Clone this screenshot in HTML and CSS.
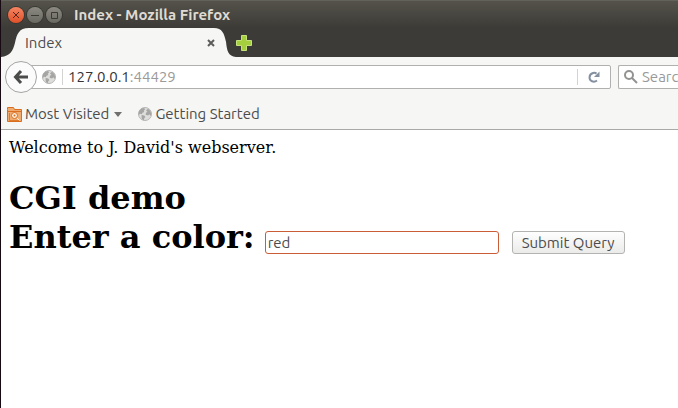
FILE: index.html
```html
<!DOCTYPE html>
<html lang="en">
<head>
<meta charset="utf-8">
<title>Index</title>
<link rel="stylesheet" href="styles.css">
</head>
<body>
<svg class="defs" aria-hidden="true">
  <symbol id="globe" viewBox="0 0 14 14">
    <circle cx="7" cy="7" r="6.5" fill="#dededd" stroke="#b5b5b4"/>
    <path d="M1 4.2 3.4 1.6 6 1l1.2 1.3-1.5 1.5.6 1.3-1.8.6-.7 1.6-1.6-.6L.6 8ZM8 3.200l2-1.500 2.400 2.200.9 3-.7 2.200-1.300-1.800-1.200 1.200-2.500-.8.5-2.100 1.400-.5ZM3.600 8l2.600.5 1.300 1.600-1.300 1.200-.2 1.900-2-.9-.4-2Z" fill="#a5a5a4"/>
  </symbol>
</svg>
<div class="window">
  <header class="chrome">
    <div class="titlebar">
      <div class="controls">
        <button class="control close" aria-label="Close"><svg viewBox="0 0 16 16"><path d="m5 5 6 6m0-6-6 6"/></svg></button>
        <button class="control" aria-label="Minimize"><svg viewBox="0 0 16 16"><path d="M4 8.500h8"/></svg></button>
        <button class="control" aria-label="Maximize"><svg viewBox="0 0 16 16"><path d="M5.500 5.500h6v6h-6z"/></svg></button>
      </div>
      <span class="title">Index - Mozilla Firefox</span>
    </div>
    <div class="tabs">
      <div class="tab">
        <svg class="tab-shape" viewBox="0 0 236 29" preserveAspectRatio="none" aria-hidden="true"><path d="M0 29C9 28 12 23 14 15 16 6 18 0 28 0H214c8 0 10 5 12 14 1 9 2 14 10 15Z"/></svg>
        <span class="tab-label">Index</span>
        <button class="tab-close" aria-label="Close tab"><svg viewBox="0 0 10 10"><path d="m2 2 6 6m0-6-6 6"/></svg></button>
      </div>
      <button class="new-tab" aria-label="New tab"><svg viewBox="0 0 16 16"><path d="M5.500.500h5v5h5v5h-5v5h-5v-5h-5v-5h5z"/></svg></button>
    </div>
  </header>
  <nav class="toolbar">
    <button class="back" aria-label="Back"><svg viewBox="0 0 16 16"><path d="M8 2 2.500 8 8 14M3 8h12"/></svg></button>
    <div class="address">
      <svg class="globe"><use href="#globe"/></svg>
      <span class="url"><span class="host">127.0.0.1</span>:44429</span>
      <button class="reload" aria-label="Reload"><svg viewBox="0 0 14 14"><path class="arc" d="M9.500 3.600C8.500 2.800 7 2.700 6 3 1.500 4.300 1.600 10 5 11.300c1.800.7 3.600.3 5-.8"/><path class="tip" d="M12.500 1.500V7H7z"/></svg></button>
    </div>
    <label class="search">
      <svg viewBox="0 0 16 16"><circle cx="6" cy="6" r="4"/><path d="m9 9 5 5"/></svg>
      <input type="text" placeholder="Search" aria-label="Search">
    </label>
  </nav>
  <nav class="bookmarks">
    <a href="#"><svg class="folder" viewBox="0 0 15 15"><path d="M.500 2.500v-2h6l1 2h7v12h-14z" fill="#f0ab70" stroke="#d96f1e"/><path d="M1 4.500h13" stroke="#d96f1e"/><path d="M2.500 6v7.500h10" fill="none" stroke="#e07a2c"/><circle cx="7.500" cy="8.500" r="3" fill="#fff0df" stroke="#d96f1e"/><circle cx="7.500" cy="8.500" r="1" fill="#d96f1e"/><path d="m10 11 2.500 2.500" stroke="#fff0df"/></svg>Most Visited<svg class="caret" viewBox="0 0 8 5"><path d="M0 0h8L4 5z"/></svg></a>
    <a href="#"><svg class="globe"><use href="#globe"/></svg>Getting Started</a>
  </nav>
  <main class="page">
    <p>Welcome to J. David's webserver.</p>
    <h1>CGI demo</h1>
    <form class="query">
      <label for="color">Enter a color:</label>
      <input id="color" type="text" value="red">
      <button type="button">Submit Query</button>
    </form>
  </main>
</div>
</body>
</html>
```
FILE: styles.css
```css
* {
  box-sizing: border-box;
}

body {
  margin: 0;
  background: #fff;
  color: #4c4c4c;
  font: 15px/20px Ubuntu, "Noto Sans", sans-serif;
}

button {
  padding: 0;
  border: 0;
  background: none;
  color: inherit;
  font: inherit;
}

svg {
  display: block;
  flex: none;
}

.defs {
  position: absolute;
  width: 0;
  height: 0;
}

.window {
  min-height: 100vh;
  border-left: 1px solid #170a12;
  overflow: hidden;
}

.chrome {
  background: linear-gradient(#55534b, #3c3b37 28px);
}

.titlebar {
  display: flex;
  align-items: center;
  gap: 12px;
  height: 28px;
  padding-left: 7px;
  border-top: 1px solid #62615a;
}

.controls {
  display: flex;
  gap: 3px;
}

.control {
  width: 16px;
  height: 16px;
  border-radius: 50%;
  background: linear-gradient(#8b8981, #6a6961);
  box-shadow: 0 0 0 1px #383731;
}

.control.close {
  background: linear-gradient(#f58462, #e0512a);
}

.control path {
  fill: none;
  stroke: #3a3932;
}

.close path {
  stroke: #5b2413;
}

.title {
  color: #dfdbd2;
  font-weight: bold;
}

.tabs {
  display: flex;
  height: 29px;
}

.tab {
  position: relative;
  display: flex;
  align-items: center;
  justify-content: space-between;
  width: 235px;
  padding: 0 20px 0 24px;
}

.tab-shape {
  position: absolute;
  inset: 0;
  width: 100%;
  height: 100%;
  fill: #f6f6f5;
}

.tab-label,
.tab-close {
  position: relative;
}

.tab-close svg {
  width: 10px;
  height: 10px;
  stroke: #5c5c5a;
  stroke-width: 2;
}

.new-tab svg {
  width: 16px;
  height: 16px;
  fill: #a5cf3c;
  stroke: #c6e27c;
}

.toolbar {
  display: flex;
  align-items: center;
  height: 40px;
  padding-left: 4px;
  background: #f6f6f5;
}

.back {
  z-index: 1;
  display: grid;
  place-items: center;
  width: 32px;
  height: 32px;
  border: 1px solid #a5a5a4;
  border-radius: 50%;
  background: #fbfbfb;
}

.back svg {
  width: 16px;
  height: 16px;
  fill: none;
  stroke: #4b4b4a;
  stroke-width: 3;
}

.address {
  display: flex;
  flex: 1;
  align-items: center;
  height: 24px;
  margin-left: -8px;
  padding-left: 12px;
  border: 1px solid #b0b0af;
  border-radius: 2px;
  background: #fff;
}

.globe {
  width: 14px;
  height: 14px;
}

.url {
  flex: 1;
  margin-left: 6px;
  padding-left: 5px;
  border-left: 1px solid #d3d3d2;
  line-height: 16px;
  color: #9a9a99;
}

.host {
  color: #333;
}

.reload {
  padding: 1px 9px;
  border-left: 1px solid #d3d3d2;
}

.reload svg {
  width: 14px;
  height: 14px;
}

.arc {
  fill: none;
  stroke: #8490a0;
  stroke-width: 2;
}

.tip {
  fill: #8490a0;
}

.search {
  display: flex;
  align-items: center;
  gap: 3px;
  width: 60px;
  height: 24px;
  margin-left: 7px;
  padding-left: 4px;
  border: 1px solid #b0b0af;
  border-right: 0;
  border-radius: 2px 0 0 2px;
  background: #fff;
}

.search svg {
  width: 16px;
  height: 16px;
  fill: none;
  stroke: #929291;
  stroke-width: 2;
}

.search input {
  flex: 1;
  min-width: 0;
  padding: 0;
  border: 0;
  outline: 0;
  background: none;
  font: inherit;
}

.search input::placeholder {
  color: #999;
}

.bookmarks {
  display: flex;
  align-items: center;
  gap: 16px;
  height: 33px;
  padding: 2px 0 0 6px;
  border-bottom: 1px solid #a9a9a8;
  background: #f6f6f5;
}

.bookmarks a {
  display: flex;
  align-items: center;
  gap: 3px;
  color: inherit;
  text-decoration: none;
}

.folder {
  width: 15px;
  height: 15px;
}

.caret {
  width: 8px;
  height: 5px;
  margin-left: 2px;
  fill: #70706f;
}

.page {
  padding: 8px;
  color: #000;
  font: 16px/19px "DejaVu Serif", serif;
}

.page p {
  margin: 0 0 22px;
}

.page h1,
.query label {
  margin: 0;
  font-size: 32px;
  font-weight: bold;
  line-height: 39px;
}

.query {
  display: flex;
  align-items: center;
}

.query input,
.query button {
  height: 23px;
  margin-top: 10px;
  border: 1px solid #b3b3b2;
  border-radius: 3px;
  color: #4c4c4c;
  font: 15px/20px Ubuntu, "Noto Sans", sans-serif;
}

.query input {
  width: 234px;
  margin-left: 10px;
  padding: 0 2px;
  border-color: #cb5c38;
  outline: 0;
  background: #fff;
}

.query button {
  margin-left: 13px;
  padding: 0 9px;
  background: linear-gradient(#fefefe, #ebebea);
}
```
